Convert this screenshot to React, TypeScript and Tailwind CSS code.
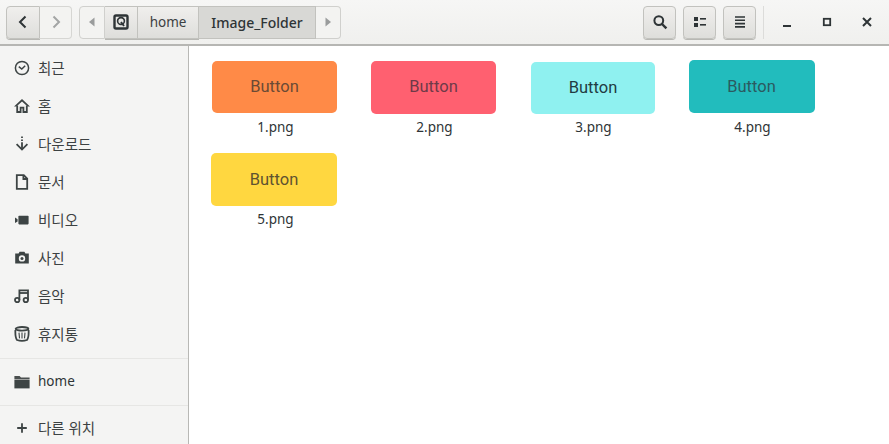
import React from 'react';

const FONT = "font-['Noto_Sans','Noto_Sans_CJK_KR',sans-serif]";

const stroke = {
  fill: 'none',
  stroke: '#3d4444',
  strokeWidth: 1.8,
};

const IconBox: React.FC<{ children: React.ReactNode }> = ({ children }) => (
  <svg width="16" height="16" viewBox="0 0 16 16" className="shrink-0">
    {children}
  </svg>
);

const icons: Record<string, React.ReactNode> = {
  recent: (
    <IconBox>
      <circle cx="8" cy="8" r="6.6" {...stroke} strokeWidth={1.5} />
      <path d="M4.8 6.6 L7.8 9 L11.2 5.8" {...stroke} strokeWidth={1.5} />
    </IconBox>
  ),
  home: (
    <IconBox>
      <path d="M0 8.4 L8 1 L16 8.4 L13.6 8.4 L8 3.4 L2.4 8.4 Z" fill="#3d4444" />
      <path d="M3.2 7.5 V14 H6.6 V9.6 H9.4 V14 H12.8 V7.5" {...stroke} />
    </IconBox>
  ),
  download: (
    <IconBox>
      <path d="M8 0.5 V2 M8 3.4 V5 M8 6.2 V13" {...stroke} />
      <path d="M2.6 8.2 L8 13.6 L13.4 8.2" {...stroke} />
    </IconBox>
  ),
  document: (
    <IconBox>
      <path d="M2.8 1.2 H9.8 L13.2 4.6 V14.8 H2.8 Z" {...stroke} />
      <path d="M9.4 1.2 V5 H13.2" {...stroke} />
    </IconBox>
  ),
  video: (
    <IconBox>
      <path d="M1 5.4 L3.6 7.2 V9.4 L1 11 Z" fill="#3d4444" />
      <rect x="4.4" y="3.8" width="10.2" height="8.6" rx="0.8" fill="#3d4444" />
    </IconBox>
  ),
  photo: (
    <IconBox>
      <path
        fillRule="evenodd"
        d="M1.2 3.6 H4.6 L5.6 1.8 H10.4 L11.4 3.6 H14.8 V13.4 H1.2 Z M8 5.2 A3.2 3.2 0 1 0 8 11.6 A3.2 3.2 0 1 0 8 5.2 Z"
        fill="#3d4444"
      />
      <circle cx="8" cy="8.4" r="1.5" fill="#3d4444" />
    </IconBox>
  ),
  music: (
    <IconBox>
      <circle cx="3.2" cy="12" r="2.2" {...stroke} />
      <circle cx="11.8" cy="12" r="2.2" {...stroke} />
      <path d="M5.4 12 V2.4 H14 V12" {...stroke} />
      <path d="M5.4 5 H14" {...stroke} />
    </IconBox>
  ),
  trash: (
    <IconBox>
      <ellipse cx="8" cy="2.8" rx="6.4" ry="1.8" {...stroke} />
      <path d="M1.4 4 C1.2 8 1.6 12 3 14 Q8 15.6 13 14 C14.4 12 14.8 8 14.6 4" {...stroke} />
      <path d="M5 6.6 L5.5 12.4 M8 6.6 V12.6 M11 6.6 L10.5 12.4" {...stroke} strokeWidth={1.1} />
    </IconBox>
  ),
  folder: (
    <IconBox>
      <path d="M0.4 2 H5.6 L7 3.6 H15.6 V5.4 H0.4 Z" fill="#4a4f4f" />
      <path d="M0.4 6 H15.6 V14.4 H0.4 Z" fill="#3d4444" />
    </IconBox>
  ),
  plus: (
    <IconBox>
      <path d="M8 3.2 V12.8 M3.2 8 H12.8" {...stroke} />
    </IconBox>
  ),
};

const SidebarRow: React.FC<{ icon: string; label: string; latin?: boolean }> = ({ icon, label, latin }) => (
  <div className="flex h-[38px] items-center pl-[14px] shrink-0">
    {icons[icon]}
    <span className={`ml-[8px] leading-none ${latin ? 'text-[13.5px] text-[#2e3436]' : 'text-[14.5px] text-[#3c4142]'}`}>
      {label}
    </span>
  </div>
);

const Divider = () => <div className="h-[1px] bg-[#e6e6e4] shrink-0" />;

const FileItem: React.FC<{
  name: string;
  bg: string;
  text: string;
  box: string;
}> = ({ name, bg, text, box }) => (
  <div className="flex flex-col items-center">
    <div className="flex h-[55px] items-center justify-center">
      <div className={`flex items-center justify-center rounded-[5px] pt-[1px] font-['Roboto',sans-serif] text-[16.5px] ${bg} ${text} ${box}`}>
        Button
      </div>
    </div>
    <div className="mt-[2px] pl-[2px] text-[13.5px] leading-[20px] text-[#2e3436]">{name}</div>
  </div>
);

const App: React.FC = () => {
  const btn =
    'flex items-center justify-center bg-gradient-to-b from-[#f0efed] to-[#dededb] border border-[#c2c2be] shadow-[0_1px_0_#b8b8b4]';

  return (
    <div className={`flex h-[444px] w-[889px] flex-col overflow-hidden bg-white ${FONT}`}>
      {/* Header bar */}
      <div className="flex h-[46px] shrink-0 items-center border-b-2 border-[#b6b6b3] bg-gradient-to-b from-[#f6f6f5] to-[#f0f0ee] pl-[6px]">
        {/* back / forward */}
        <div className="flex h-[33px]">
          <div className={`${btn} w-[34px] rounded-l-[4px]`}>
            <svg width="16" height="16" viewBox="0 0 16 16">
              <path d="M10.5 2.5 L5 8 L10.5 13.5" fill="none" stroke="#2e3436" strokeWidth="2" />
            </svg>
          </div>
          <div className="flex w-[32px] items-center justify-center rounded-r-[4px] border border-l-0 border-[#d6d6d3] bg-[#f3f3f1]">
            <svg width="16" height="16" viewBox="0 0 16 16">
              <path d="M5.5 2.5 L11 8 L5.5 13.5" fill="none" stroke="#a3a5a5" strokeWidth="2" />
            </svg>
          </div>
        </div>

        {/* path bar */}
        <div className="ml-[7px] flex h-[33px]">
          <div className="flex w-[26px] items-center justify-center rounded-l-[4px] border border-[#d0d0cd] bg-[#f3f3f1]">
            <svg width="8" height="10" viewBox="0 0 8 10">
              <path d="M6.5 0.5 V9.5 L1 5 Z" fill="#9a9c9c" />
            </svg>
          </div>
          <div className={`${btn} w-[33px] border-l-0`}>
            <svg width="16" height="16" viewBox="0 0 16 16">
              <rect x="1.5" y="1.5" width="13" height="13" rx="1.5" fill="none" stroke="#2e3436" strokeWidth="2.4" />
              <circle cx="8" cy="7" r="3.4" fill="none" stroke="#2e3436" strokeWidth="1.6" />
              <path d="M8 8 L11 12" stroke="#2e3436" strokeWidth="1.8" />
            </svg>
          </div>
          <div className={`${btn} w-[61px] border-l-0 text-[13.5px] text-[#3c4142]`}>home</div>
          <div className="flex w-[117px] items-center justify-center border border-l-0 border-[#c2c2be] bg-[#d8d8d5] text-[14px] font-medium text-[#2e3436]">
            Image_Folder
          </div>
          <div className="flex w-[25px] items-center justify-center rounded-r-[4px] border border-l-0 border-[#d0d0cd] bg-[#f3f3f1]">
            <svg width="8" height="10" viewBox="0 0 8 10">
              <path d="M1.5 0.5 V9.5 L7 5 Z" fill="#9a9c9c" />
            </svg>
          </div>
        </div>

        {/* actions */}
        <div className="ml-[302px] flex h-[33px] gap-[7px]">
          <div className={`${btn} w-[33px] rounded-[4px]`}>
            <svg width="16" height="16" viewBox="0 0 16 16">
              <circle cx="6.8" cy="6.6" r="4.4" fill="none" stroke="#2e3436" strokeWidth="2" />
              <path d="M10 10 L14.4 14.4" stroke="#2e3436" strokeWidth="2.4" />
            </svg>
          </div>
          <div className={`${btn} w-[33px] rounded-[4px]`}>
            <svg width="16" height="16" viewBox="0 0 16 16">
              <rect x="2" y="3" width="4" height="4" fill="#2e3436" />
              <rect x="2" y="9" width="4" height="4" fill="#2e3436" />
              <rect x="8" y="4" width="6" height="1.6" fill="#2e3436" />
              <rect x="8" y="10" width="6" height="1.6" fill="#2e3436" />
            </svg>
          </div>
          <div className={`${btn} w-[33px] rounded-[4px]`}>
            <svg width="16" height="16" viewBox="0 0 16 16">
              <path d="M3 3 H13 M3 6.3 H13 M3 9.6 H13 M3 12.9 H13" stroke="#2e3436" strokeWidth="1.6" />
            </svg>
          </div>
        </div>
        <div className="ml-[7px] h-[33px] w-[1px] bg-[#dcdcda]" />

        {/* window controls */}
        <div className="ml-[3px] flex items-center">
          <div className="flex w-[40px] justify-center">
            <svg width="16" height="16" viewBox="0 0 16 16">
              <rect x="4" y="11" width="8" height="2" fill="#2e3436" />
            </svg>
          </div>
          <div className="flex w-[40px] justify-center">
            <svg width="16" height="16" viewBox="0 0 16 16">
              <rect x="4.8" y="4.8" width="6.4" height="6.4" fill="none" stroke="#2e3436" strokeWidth="1.8" />
            </svg>
          </div>
          <div className="flex w-[40px] justify-center">
            <svg width="16" height="16" viewBox="0 0 16 16">
              <path d="M4 4 L12 12 M12 4 L4 12" stroke="#2e3436" strokeWidth="2" />
            </svg>
          </div>
        </div>
      </div>

      {/* Body */}
      <div className="flex min-h-0 flex-1">
        <aside className="flex w-[189px] shrink-0 flex-col border-r border-[#b8b8b5] bg-[#f4f4f3] pt-[3px]">
          <SidebarRow icon="recent" label="최근" />
          <SidebarRow icon="home" label="홈" />
          <SidebarRow icon="download" label="다운로드" />
          <SidebarRow icon="document" label="문서" />
          <SidebarRow icon="video" label="비디오" />
          <SidebarRow icon="photo" label="사진" />
          <SidebarRow icon="music" label="음악" />
          <SidebarRow icon="trash" label="휴지통" />
          <div className="h-[5px] shrink-0" />
          <Divider />
          <div className="h-[4px] shrink-0" />
          <SidebarRow icon="folder" label="home" latin />
          <div className="h-[4px] shrink-0" />
          <Divider />
          <div className="h-[3px] shrink-0" />
          <SidebarRow icon="plus" label="다른 위치" />
        </aside>

        <main className="grid flex-1 grid-cols-[repeat(4,159px)] auto-rows-[92px] content-start pl-[6px] pt-[14px]">
          <FileItem name="1.png" bg="bg-[#ff8a47]" text="text-[#6b4a35]" box="h-[52px] w-[125px] mb-[2px]" />
          <FileItem name="2.png" bg="bg-[#ff6070]" text="text-[#6e3a48]" box="h-[53px] w-[125px] mb-[1px]" />
          <FileItem name="3.png" bg="bg-[#8ff1f0]" text="text-[#223c42]" box="h-[52px] w-[124px] ml-[1px]" />
          <FileItem name="4.png" bg="bg-[#22bcbd]" text="text-[#2b5a60]" box="h-[53px] w-[126px] mb-[2px]" />
          <FileItem name="5.png" bg="bg-[#ffd740]" text="text-[#5f5330]" box="h-[53px] w-[126px] mr-[1px]" />
        </main>
      </div>
    </div>
  );
};

export default App;
